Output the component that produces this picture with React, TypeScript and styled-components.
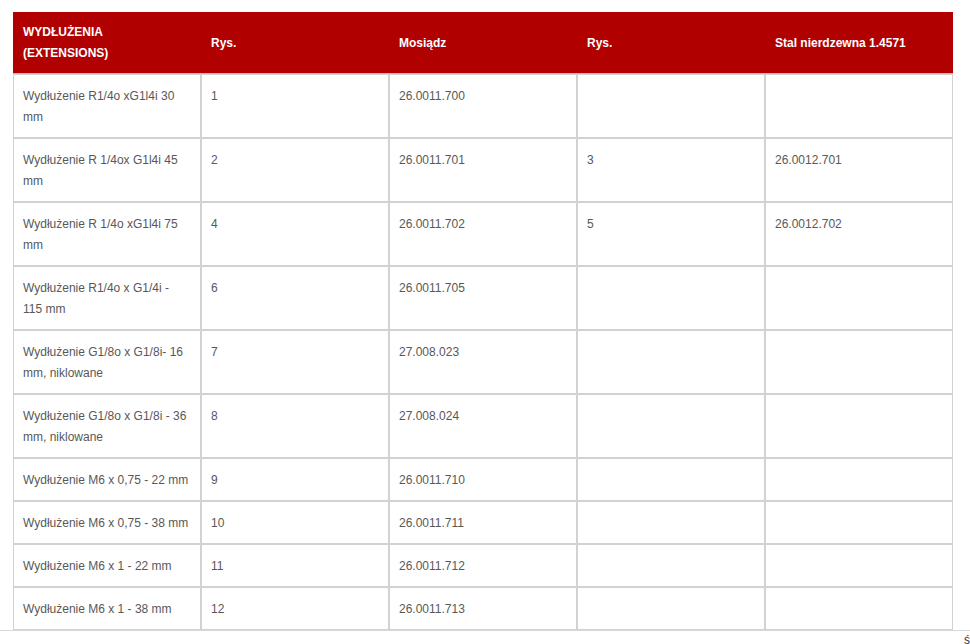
import React from "react";
import styled, { createGlobalStyle } from "styled-components";

const Global = createGlobalStyle`
  html, body { margin: 0; padding: 0; background: #fff; }
  body { font-family: "Liberation Sans", Arial, sans-serif; }
`;

const Wrapper = styled.div`
  padding: 12px 17px 0 13px;
  border-bottom: 1px solid #d8d8d8;
`;

const Table = styled.table`
  width: 940px;
  table-layout: fixed;
  border-collapse: separate;
  border-spacing: 0;
  font-size: 12px;
  line-height: 21px;
`;

const Th = styled.th`
  background: #b00000;
  color: #fff;
  font-weight: bold;
  text-align: left;
  vertical-align: middle;
  padding: 10px 10px 9px 10px;
  border-bottom: 1px solid #f2a6a6;
`;

const Td = styled.td`
  color: #585858;
  text-align: left;
  vertical-align: top;
  padding: 11px 9px 9px;
  border: 1px solid #d2d2d2;
`;

const Col = styled.col`
  width: 188px;
`;

const Corner = styled.div`
  position: absolute;
  right: 0;
  top: 633px;
  font-size: 12px;
  color: #333;
  line-height: 14px;
`;

type Row = [string, string, string, string, string];

const rows: Row[] = [
  ["Wydłużenie R1/4o xG1l4i 30 mm", "1", "26.0011.700", "", ""],
  ["Wydłużenie R 1/4ox G1l4i 45 mm", "2", "26.0011.701", "3", "26.0012.701"],
  ["Wydłużenie R 1/4o xG1l4i 75 mm", "4", "26.0011.702", "5", "26.0012.702"],
  ["Wydłużenie R1/4o x G1/4i - 115 mm", "6", "26.0011.705", "", ""],
  ["Wydłużenie G1/8o x G1/8i- 16 mm, niklowane", "7", "27.008.023", "", ""],
  ["Wydłużenie G1/8o x G1/8i - 36 mm, niklowane", "8", "27.008.024", "", ""],
  ["Wydłużenie M6 x 0,75 - 22 mm", "9", "26.0011.710", "", ""],
  ["Wydłużenie M6 x 0,75 - 38 mm", "10", "26.0011.711", "", ""],
  ["Wydłużenie M6 x 1 - 22 mm", "11", "26.0011.712", "", ""],
  ["Wydłużenie M6 x 1 - 38 mm", "12", "26.0011.713", "", ""],
];

export default function App() {
  return (
    <>
      <Global />
      <Wrapper>
        <Table>
          <colgroup>
            <Col />
            <Col />
            <Col />
            <Col />
            <Col />
          </colgroup>
          <thead>
            <tr>
              <Th>
                WYDŁUŻENIA
                <br />
                (EXTENSIONS)
              </Th>
              <Th>Rys.</Th>
              <Th>Mosiądz</Th>
              <Th>Rys.</Th>
              <Th>Stal nierdzewna 1.4571</Th>
            </tr>
          </thead>
          <tbody>
            {rows.map((r, i) => (
              <tr key={i}>
                {r.map((c, j) => (
                  <Td key={j}>{c}</Td>
                ))}
              </tr>
            ))}
          </tbody>
        </Table>
      </Wrapper>
      <Corner>ś</Corner>
    </>
  );
}
